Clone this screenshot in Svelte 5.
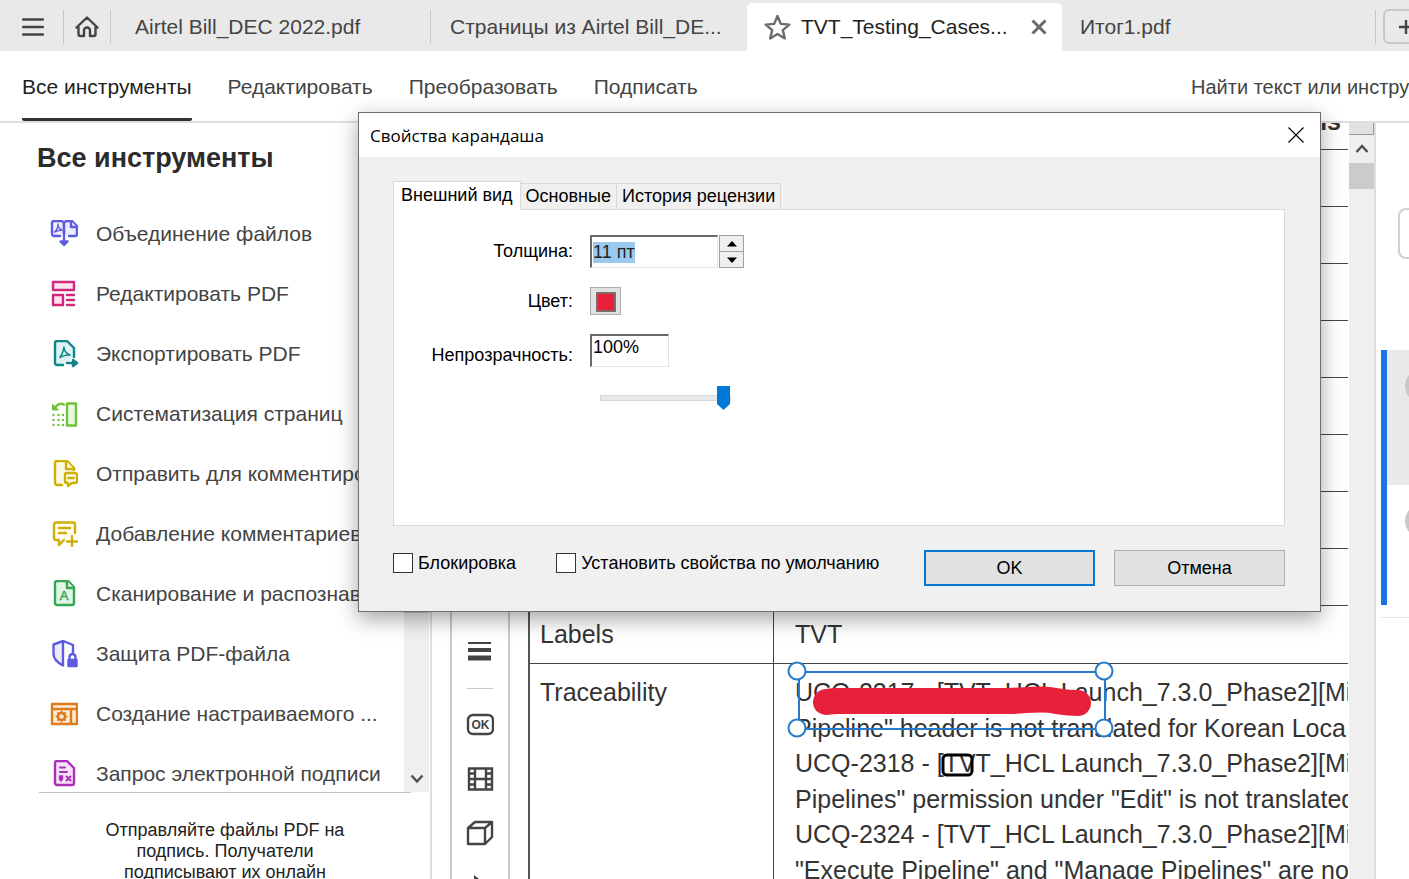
<script>
	import { onMount } from 'svelte';

	let thicknessInput;
	let thickness = '11 пт';
	let opacity = 100;
	let locked = false;
	let makeDefault = false;

	const menu = ['Все инструменты', 'Редактировать', 'Преобразовать', 'Подписать'];
	const dialogTabs = ['Внешний вид', 'Основные', 'История рецензии'];
	const emptyRows = [1, 2, 3, 4, 5, 6, 7, 8];

	const tools = [
		{
			name: 'Объединение файлов',
			color: '#5c5ce0',
			fill: '#ececfb',
			icon: '<path d="M10 16H4a2 2 0 0 1-2-2V3a2 2 0 0 1 2-2h8l2 2v10"/><path d="M14 13V3l2-2h6l5 5v8a2 2 0 0 1-2 2h-6"/><path d="M21 1v6h6"/><path d="M8 4c0 4-1 6-3.500 8M8 4c0 3 1.500 5 4 6-3 0-5 .8-7 2" stroke-width="1.300" fill="none"/><path d="M14 11v12" fill="none"/><path d="M10.500 21.500h7L14 25z" fill="#5c5ce0"/>'
		},
		{
			name: 'Редактировать PDF',
			color: '#d0297b',
			fill: '#fde4f0',
			icon: '<rect x="3" y="2" width="21" height="8"/><rect x="3" y="15" width="10" height="10"/><path d="M17 15h7M17 20h7M17 25h7"/>'
		},
		{
			name: 'Экспортировать PDF',
			color: '#12858a',
			fill: '#dff3f3',
			icon: '<path d="M13 25H7a2 2 0 0 1-2-2V3a2 2 0 0 1 2-2h10l7 7v9"/><path d="M17 23h9" fill="none"/><path d="M23 20l4 3-4 3z" fill="#12858a"/><path d="M14 7c-.5 4-1.500 7-4 10.500M14 7c0 4 2 6.500 6 8-4-.5-7 .5-10 2.500" stroke-width="1.500" fill="none"/>'
		},
		{
			name: 'Систематизация страниц',
			color: '#6fc13c',
			fill: '#e9f8dd',
			icon: '<rect x="17" y="3.500" width="9" height="22"/><path d="M5 8c2-4 6-5 9-3.500" fill="none"/><path d="M2.500 4.500V10H8z" fill="#6fc13c" stroke-width="1"/><path d="M3.500 15h0M8.500 15h0M13 15h0M3.500 20h0M8.500 20h0M13 20h0M3.500 25h0M8.500 25h0M13 25h0"/>'
		},
		{
			name: 'Отправить для комментирования',
			color: '#cdb005',
			fill: '#fdf8e6',
			icon: '<path d="M12 25H7a2 2 0 0 1-2-2V3a2 2 0 0 1 2-2h10l7 7v2"/><path d="M16 1v8h8"/><path d="M17 13h8a2 2 0 0 1 2 2v6a2 2 0 0 1-2 2h-3l-4 3v-3h-1a2 2 0 0 1-2-2v-6a2 2 0 0 1 2-2z"/><path d="M18.500 18h5"/>'
		},
		{
			name: 'Добавление комментариев',
			color: '#cdb005',
			fill: '#fffdf0',
			icon: '<path d="M14 20l-5 5v-5H6a2 2 0 0 1-2-2V4.500a2 2 0 0 1 2-2h17a2 2 0 0 1 2 2V13"/><path d="M9 8h11M9 13h7M22 16v10M17 21.500h10"/>'
		},
		{
			name: 'Сканирование и распознавание',
			color: '#37a552',
			fill: '#e0f5e5',
			icon: '<path d="M7 1h11l6 6v16a2 2 0 0 1-2 2H7a2 2 0 0 1-2-2V3a2 2 0 0 1 2-2z"/><path d="M17 1v7h7"/><text x="14" y="20" text-anchor="middle" font-family="Liberation Sans, sans-serif" font-size="13" fill="#37a552" stroke-width=".5">A</text>'
		},
		{
			name: 'Защита PDF-файла',
			color: '#5c5ce0',
			fill: '#ececfb',
			icon: '<path d="M13 1v24.500c-6-3-9.500-7-9.500-12V4.500z"/><path d="M13 1l10 4v7" fill="none"/><path d="M19.500 19v-2a3 3 0 0 1 6 0v2" fill="none"/><path d="M18.500 20h8v6h-8z" fill="#5c5ce0"/>'
		},
		{
			name: 'Создание настраиваемого ...',
			color: '#dc7c1d',
			fill: '#fdebd3',
			icon: '<path d="M2 4h25v20H2z"/><path d="M2 9h25M21 9v15"/><circle cx="11.500" cy="16.500" r="3.500"/><path d="M11.500 11.500v1M11.500 20.500v1M6.500 16.500h1M15.500 16.500h1M8 13l1 1M15 20l-1-1M15 13l-1 1M8 20l1-1" stroke-width="2"/>'
		},
		{
			name: 'Запрос электронной подписи',
			color: '#a92fb8',
			fill: '#f8e2fa',
			icon: '<path d="M7 1h10l7 7v15a2 2 0 0 1-2 2H7a2 2 0 0 1-2-2V3a2 2 0 0 1 2-2z"/><path d="M10 7.500h5M10 12h7" stroke-width="2"/><path d="M9.500 16h3v3L11 21l-1.500-2z" stroke-width="1.500" fill="#a92fb8"/><path d="M16.500 16.500l4 4M20.500 16.500l-4 4" stroke-width="2"/>'
		}
	];

	const issues = [
		['UCQ-2317 - [TVT_HCL Launch_7.3.0_Phase2][Mi', 'Pipeline" header is not translated for Korean Loca'],
		['UCQ-2318 - [TVT_HCL Launch_7.3.0_Phase2][Mi', 'Pipelines" permission under "Edit" is not translated'],
		['UCQ-2324 - [TVT_HCL Launch_7.3.0_Phase2][Mi', '"Execute Pipeline" and "Manage Pipelines" are no']
	];

	function step(n) {
		const value = Math.max(0, parseInt(thickness) + n);
		thickness = value + ' пт';
	}

	onMount(() => {
		thicknessInput.focus();
		thicknessInput.select();
	});
</script>

<div class="app">
	<header class="tabbar">
		<button class="menu-btn" aria-label="Меню">
			<svg width="22" height="20" viewBox="0 0 22 20"><path d="M1 2.500h20M1 10h20M1 17.500h20" stroke="#444" stroke-width="2.400" stroke-linecap="round"/></svg>
		</button>
		<button class="home-btn" aria-label="Главная">
			<svg width="24" height="22" viewBox="0 0 24 22"><path d="M12 1.500L1.500 11.500h2V18a2 2 0 0 0 2 2H9v-5.500a3 3 0 0 1 6 0V20h3.500a2 2 0 0 0 2-2v-6.500h2z" fill="none" stroke="#444" stroke-width="2.400" stroke-linejoin="round"/></svg>
		</button>
		<button class="tab first">Airtel Bill_DEC 2022.pdf</button>
		<button class="tab second">Страницы из Airtel Bill_DE...</button>
		<div class="tab active">
			<svg width="27" height="26" viewBox="0 0 27 26"><path d="M13.500 2l3.300 7.900 8.500.7-6.500 5.500 2 8.300-7.300-4.500-7.300 4.500 2-8.300-6.500-5.500 8.500-.7z" fill="none" stroke="#6b6b6b" stroke-width="2.400" stroke-linejoin="round"/></svg>
			<span>TVT_Testing_Cases...</span>
			<button aria-label="Закрыть вкладку">
				<svg width="16" height="16" viewBox="0 0 16 16"><path d="M1.500 1.500l13 13M14.500 1.500l-13 13" stroke="#6b6b6b" stroke-width="3"/></svg>
			</button>
		</div>
		<button class="tab last">Итог1.pdf</button>
		<div class="new-tab">
			<button aria-label="Создать">
				<svg width="16" height="16" viewBox="0 0 16 16"><path d="M8 1v14M1 8h14" stroke="#444" stroke-width="2.400"/></svg>
			</button>
		</div>
	</header>

	<nav class="toolbar">
		{#each menu as item, i}
			<a href="#menu" class:current={i === 0}>{item}</a>
		{/each}
		<span class="find">Найти текст или инстру</span>
	</nav>

	<main>
		<aside class="sidebar">
			<div class="tools">
				<div class="tools-list">
					<h2>Все инструменты</h2>
					<ul>
						{#each tools as tool}
							<li>
								<a href="#tool">
									<svg width="28" height="28" viewBox="0 0 28 28" fill={tool.fill} stroke={tool.color} stroke-width="2.400" stroke-linecap="round" stroke-linejoin="round">{@html tool.icon}</svg>
									<span>{tool.name}</span>
								</a>
							</li>
						{/each}
					</ul>
				</div>
				<div class="side-scroll">
					<div class="side-thumb"></div>
					<svg width="14" height="10" viewBox="0 0 14 10"><path d="M1.500 1.500L7 7.500l5.500-6" fill="none" stroke="#505050" stroke-width="2.500"/></svg>
				</div>
			</div>
			<p class="promo">Отправляйте файлы PDF на<br>подпись. Получатели<br>подписывают их онлайн</p>
		</aside>

		<div class="quick">
			<button aria-label="Толщина линии">
				<svg width="28" height="28" viewBox="0 0 28 28" stroke="#444"><path d="M2 6h23" stroke-width="2"/><path d="M2 13h23" stroke-width="4"/><path d="M2 21h23" stroke-width="5"/></svg>
			</button>
			<hr>
			<button aria-label="Кнопка OK">
				<svg width="28" height="28" viewBox="0 0 28 28"><rect x="2" y="4" width="25" height="19" rx="5" fill="none" stroke="#444" stroke-width="2.400"/><text x="14.500" y="18" text-anchor="middle" font-family="Liberation Sans, sans-serif" font-weight="bold" font-size="12" fill="#444">OK</text></svg>
			</button>
			<button aria-label="Видео">
				<svg width="28" height="28" viewBox="0 0 28 28" fill="none" stroke="#444" stroke-width="2.400"><path d="M3 3.500h23v21H3zM9 3.500v21M20 3.500v21M9 14h11M3 8.500h6M3 14h6M3 19.500h6M20 8.500h6M20 14h6M20 19.500h6"/></svg>
			</button>
			<button aria-label="3D-объект">
				<svg width="28" height="28" viewBox="0 0 28 28" fill="none" stroke="#444" stroke-width="2.400" stroke-linejoin="round"><path d="M2 9h17v16H2zM2 9l7-6h17l-7 6M26 3v15l-7 7"/></svg>
			</button>
			<button aria-label="Выбрать объект">
				<svg width="28" height="28" viewBox="0 0 28 28"><path d="M8 2l16 13-8 1-8 9z" fill="#444"/></svg>
			</button>
		</div>

		<section class="document">
			<table>
				<tbody>
					<tr><th></th><th class="heading">is</th></tr>
					{#each emptyRows as row}
						<tr><td></td><td></td></tr>
					{/each}
					<tr><td>Labels</td><td>TVT</td></tr>
					<tr class="trace">
						<td>Traceability</td>
						<td>
							{#each issues as issue}
								<p>{issue[0]}<br>{issue[1]}</p>
							{/each}
							<svg class="marks" width="340" height="120" viewBox="0 0 340 120">
								<path d="M52 38Q58 37 66 37H234C250 37 262 34 276 36S290 39 304 39" fill="none" stroke="#e62139" stroke-width="26" stroke-linecap="round" stroke-linejoin="round"/>
								<rect x="25" y="8" width="306" height="57" fill="none" stroke="#2779c9" stroke-width="2"/>
								{#each [[23, 7], [330, 7], [23, 64], [330, 64]] as [cx, cy]}
									<circle {cx} {cy} r="8.500" fill="#fff" stroke="#2779c9" stroke-width="2"/>
								{/each}
								<rect x="169" y="91" width="29" height="20" rx="4" fill="none" stroke="#000" stroke-width="3"/>
							</svg>
						</td>
					</tr>
				</tbody>
			</table>
		</section>

		<div class="doc-scroll">
			<div class="split"></div>
			<svg width="14" height="10" viewBox="0 0 14 10"><path d="M1.500 8L7 2l5.500 6" fill="none" stroke="#505050" stroke-width="2.500"/></svg>
			<div class="doc-thumb"></div>
		</div>

		<aside class="comments">
			<input type="text" aria-label="Поиск комментариев">
			<ul>
				<li class="selected"><i></i></li>
				<li><i></i></li>
			</ul>
		</aside>
	</main>

	<div class="dialog" role="dialog" aria-label="Свойства карандаша">
		<div class="title">
			<span>Свойства карандаша</span>
			<button aria-label="Закрыть">
				<svg width="16" height="16" viewBox="0 0 16 16"><path d="M.5.500l15 15M15.500.500l-15 15" stroke="#000" stroke-width="1.200"/></svg>
			</button>
		</div>
		<div class="content">
			<div class="dialog-tabs">
				{#each dialogTabs as name, i}
					<button class:active={i === 0}>{name}</button>
				{/each}
			</div>
			<div class="panel">
				<label for="thickness">Толщина:</label>
				<div class="spin">
					<input id="thickness" type="text" bind:this={thicknessInput} bind:value={thickness}>
					<div class="arrows">
						<button aria-label="Больше" on:click={() => step(1)}><svg width="10" height="6" viewBox="0 0 10 6"><path d="M0 5.500L5 0l5 5.500z"/></svg></button>
						<button aria-label="Меньше" on:click={() => step(-1)}><svg width="10" height="6" viewBox="0 0 10 6"><path d="M0 .500L5 6l5-5.500z"/></svg></button>
					</div>
				</div>
				<label for="color">Цвет:</label>
				<button id="color" class="color" aria-label="Цвет"><span></span></button>
				<label class="opacity-label" for="opacity">Непрозрачность:</label>
				<input id="opacity" class="opacity" type="text" value="{opacity}%">
				<input class="slider" type="range" min="0" max="100" aria-label="Непрозрачность" bind:value={opacity}>
			</div>
			<div class="actions">
				<label><input type="checkbox" bind:checked={locked}>Блокировка</label>
				<label><input type="checkbox" bind:checked={makeDefault}>Установить свойства по умолчанию</label>
				<div class="buttons">
					<button class="ok">OK</button>
					<button>Отмена</button>
				</div>
			</div>
		</div>
	</div>
</div>

<style>
	:global(body) {
		margin: 0;
		overflow: hidden;
	}

	.app {
		position: relative;
		display: flex;
		flex-direction: column;
		height: 100vh;
		overflow: hidden;
		background: #fff;
		color: #444;
		font-family: "Liberation Sans", Arial, sans-serif;
		font-size: 21px;
	}

	button, input {
		font: inherit;
		color: inherit;
		margin: 0;
		padding: 0;
		border: none;
		background: none;
		border-radius: 0;
		box-sizing: border-box;
		outline: none;
	}

	svg {
		display: block;
		flex: none;
	}

	a {
		color: inherit;
		text-decoration: none;
	}

	ul {
		list-style: none;
		margin: 0;
		padding: 0;
	}

	.tabbar {
		display: flex;
		align-items: center;
		flex: none;
		box-sizing: border-box;
		height: 51px;
		padding-top: 2px;
		background: #e9e9e9;
		white-space: nowrap;
	}

	.menu-btn {
		height: 34px;
		padding: 0 19px 0 22px;
		border-right: 1px solid #c8c8c8;
	}

	.home-btn {
		height: 34px;
		padding: 0 11px;
		border-right: 1px solid #c8c8c8;
	}

	.tab {
		box-sizing: border-box;
		flex: none;
		text-align: left;
	}

	.tab.first {
		width: 320px;
		height: 34px;
		padding-left: 24px;
		border-right: 1px solid #c8c8c8;
	}

	.tab.second {
		width: 316px;
		padding-left: 19px;
	}

	.tab.active {
		display: flex;
		align-items: center;
		align-self: flex-end;
		width: 315px;
		height: 48px;
		padding: 0 15px 0 17px;
		background: #fff;
		border-radius: 5px 5px 0 0;
		color: #222;
	}

	.tab.active span {
		flex: 1;
		margin-left: 10px;
	}

	.tab.last {
		flex: 1;
		padding-left: 18px;
	}

	.new-tab {
		display: flex;
		align-items: center;
		width: 33px;
		height: 34px;
		border-left: 1px solid #c8c8c8;
	}

	.new-tab button {
		flex: none;
		width: 46px;
		height: 35px;
		margin-left: 7px;
		padding-left: 13px;
		border: 2px solid #c8c8c8;
		border-radius: 6px;
	}

	.toolbar {
		display: flex;
		flex: none;
		box-sizing: border-box;
		height: 72px;
		padding-left: 22px;
		gap: 36px;
		line-height: 72px;
		border-bottom: 2px solid #dedede;
		white-space: nowrap;
	}

	.toolbar a.current {
		box-sizing: border-box;
		height: 70px;
		color: #222;
		border-bottom: 3px solid #333;
		border-radius: 2px;
	}

	.find {
		width: 218px;
		margin-left: auto;
		font-size: 20px;
	}

	main {
		display: flex;
		flex: 1;
		min-height: 0;
	}

	.sidebar {
		display: flex;
		flex-direction: column;
		flex: none;
		width: 430px;
		border-right: 2px solid #dedede;
	}

	.tools {
		display: flex;
		flex: 1;
		min-height: 0;
	}

	.tools-list {
		flex: 1;
		overflow: hidden;
	}

	h2 {
		margin: 0;
		padding-left: 37px;
		color: #2c2c2c;
		font-size: 27px;
		line-height: 70px;
		height: 81px;
	}

	.tools-list a {
		display: flex;
		align-items: center;
		height: 60px;
		padding: 0 18px 0 50px;
		gap: 18px;
	}

	.tools-list span {
		overflow: hidden;
		white-space: nowrap;
	}

	.side-scroll {
		display: flex;
		flex-direction: column;
		justify-content: space-between;
		align-items: center;
		width: 25px;
		margin-right: 1px;
		padding-bottom: 8px;
		background: #efefef;
	}

	.side-thumb {
		width: 100%;
		height: 490px;
		background: #c9c9c9;
	}

	.promo {
		box-sizing: border-box;
		height: 87px;
		margin: 0 19px 0 39px;
		padding-top: 27px;
		border-top: 1px solid #c4c4c4;
		color: #222;
		font-size: 18px;
		line-height: 21px;
		text-align: center;
	}

	.quick {
		display: flex;
		flex-direction: column;
		flex: none;
		width: 56px;
		margin-left: 18px;
		padding-top: 501px;
		border: solid #c8c8c8;
		border-width: 0 2px;
		overflow: hidden;
	}

	.quick button {
		display: flex;
		align-items: center;
		justify-content: center;
		flex: none;
		height: 54px;
	}

	.quick hr {
		flex: none;
		width: 26px;
		margin: 10px auto 9px;
		border: none;
		border-top: 1px solid #c8c8c8;
	}

	.document {
		flex: 1;
		min-width: 0;
		padding-left: 18px;
		margin-right: 1px;
		overflow: hidden;
	}

	table {
		width: 100%;
		margin-top: -30px;
		table-layout: fixed;
		border-spacing: 0;
		border-left: 2px solid #555;
		color: #333;
		font-size: 25px;
	}

	td, th {
		height: 56px;
		padding: 0;
		border-bottom: 1px solid #444;
		white-space: nowrap;
	}

	tr:nth-child(10) td {
		height: 57px;
	}

	td:first-child, th:first-child {
		width: 244px;
		padding-left: 10px;
		box-sizing: border-box;
		border-right: 1px solid #444;
	}

	td:last-child {
		padding-left: 21px;
	}

	.heading {
		padding-right: 7px;
		text-align: right;
	}

	.trace td {
		position: relative;
		padding-top: 10px;
		line-height: 36px;
		vertical-align: top;
	}

	.trace p {
		margin: 0 0 -1px;
	}

	.marks {
		position: absolute;
		top: 0;
		left: 0;
		overflow: visible;
	}

	.doc-scroll {
		display: flex;
		flex-direction: column;
		align-items: center;
		flex: none;
		width: 25px;
		background: #efefef;
		border-right: 2px solid #dedede;
	}

	.split {
		box-sizing: border-box;
		width: 100%;
		height: 12px;
		margin-bottom: 9px;
		background: #e1e1e1;
		border: solid #999;
		border-width: 0 1px 1px 0;
	}

	.doc-thumb {
		width: 100%;
		height: 26px;
		margin-top: 9px;
		background: #cbcbcb;
	}

	.comments {
		flex: none;
		width: 33px;
		padding-top: 85px;
		overflow: hidden;
	}

	.comments input {
		display: block;
		width: 260px;
		height: 51px;
		margin-left: 22px;
		border: 2px solid #d0d0d0;
		border-radius: 8px;
	}

	.comments ul {
		margin: 91px 0 0 5px;
		padding-bottom: 12px;
		border-bottom: 1px solid #e4e4e4;
	}

	.comments li {
		box-sizing: border-box;
		height: 120px;
		padding: 19px 0 0 18px;
		border-left: 6px solid #1a73e8;
		overflow: hidden;
	}

	.comments li.selected {
		height: 135px;
		background: #e9e9e9;
	}

	.comments i {
		display: block;
		width: 34px;
		height: 34px;
		border-radius: 50%;
		background: #c8c8c8;
	}

	.dialog {
		position: absolute;
		top: 112px;
		left: 358px;
		right: 88px;
		background: #f0f0f0;
		border: 1px solid #6e6e6e;
		box-shadow: 0 7px 20px rgba(0, 0, 0, 0.36);
		color: #000;
		font-size: 18px;
	}

	.title {
		display: flex;
		align-items: center;
		justify-content: space-between;
		height: 44px;
		padding: 0 16px 0 11px;
		background: #fff;
		font-family: "Open Sans", "Noto Sans", sans-serif;
		font-size: 17px;
	}

	.content {
		padding: 24px 35px 25px 34px;
	}

	.dialog-tabs {
		display: flex;
		align-items: flex-end;
	}

	.dialog-tabs button {
		height: 26px;
		padding: 0 5px;
		border: 1px solid #d9d9d9;
		border-width: 1px 1px 0 0;
		white-space: nowrap;
	}

	.dialog-tabs button.active {
		position: relative;
		height: 29px;
		margin-bottom: -1px;
		padding: 0 7px 2px;
		border-left-width: 1px;
		background: #fff;
	}

	.panel {
		display: grid;
		grid-template-columns: 179px auto;
		grid-template-rows: 33px 28px 33px 24px;
		column-gap: 17px;
		row-gap: 19px;
		align-items: center;
		justify-content: start;
		box-sizing: border-box;
		min-height: 317px;
		padding-top: 25px;
		align-content: start;
		border: 1px solid #d9d9d9;
		background: #fff;
	}

	.panel label {
		text-align: right;
	}

	.panel .opacity-label {
		padding-top: 9px;
	}

	.spin {
		display: flex;
		gap: 1px;
	}

	.panel input[type="text"] {
		height: 33px;
		padding: 0 1px;
		border: solid;
		border-width: 2px 1px 1px 2px;
		border-color: #696969 #e3e3e3 #e3e3e3 #696969;
		line-height: 25px;
	}

	.spin input[type="text"] {
		width: 128px;
	}

	.spin input::selection {
		background: #99c9ef;
		color: #222;
	}

	.arrows button {
		display: flex;
		align-items: center;
		justify-content: center;
		width: 25px;
		height: 17px;
		border: 1px solid #a0a0a0;
		background: #efefef;
	}

	.arrows button + button {
		height: 16px;
		border-top: none;
	}

	.color {
		width: 31px;
		height: 28px;
		padding: 4px;
		border: 1px solid #adadad;
		background: #e1e1e1;
	}

	.color span {
		display: block;
		box-sizing: border-box;
		width: 20px;
		height: 20px;
		margin: auto;
		border: 2px solid #806a6c;
		background: #e8203a;
	}

	.panel input.opacity {
		width: 79px;
		padding-bottom: 8px;
	}

	.slider {
		grid-column: 2;
		appearance: none;
		width: 131px;
		height: 24px;
		margin-left: 10px;
	}

	.slider::-webkit-slider-runnable-track {
		height: 6px;
		background: #e7eaea;
		border: 1px solid #d6d6d6;
		box-sizing: border-box;
	}

	.slider::-webkit-slider-thumb {
		appearance: none;
		width: 13px;
		height: 24px;
		margin-top: -10px;
		background: #0078d7;
		clip-path: polygon(0 0, 100% 0, 100% 75%, 50% 100%, 0 75%);
	}

	.actions {
		display: flex;
		align-items: center;
		margin-top: 24px;
	}

	.actions label {
		display: flex;
		align-items: center;
		gap: 5px;
		margin-right: 40px;
		padding-bottom: 10px;
		white-space: nowrap;
	}

	.actions input {
		appearance: none;
		width: 20px;
		height: 20px;
		border: 1px solid #333;
		background: #fff;
	}

	.actions input:checked {
		background: #0078d7;
	}

	.buttons {
		display: flex;
		gap: 19px;
		margin-left: auto;
	}

	.buttons button {
		width: 171px;
		height: 36px;
		border: 1px solid #adadad;
		background: #e1e1e1;
	}

	.buttons .ok {
		border: 2px solid #0078d7;
	}
</style>
